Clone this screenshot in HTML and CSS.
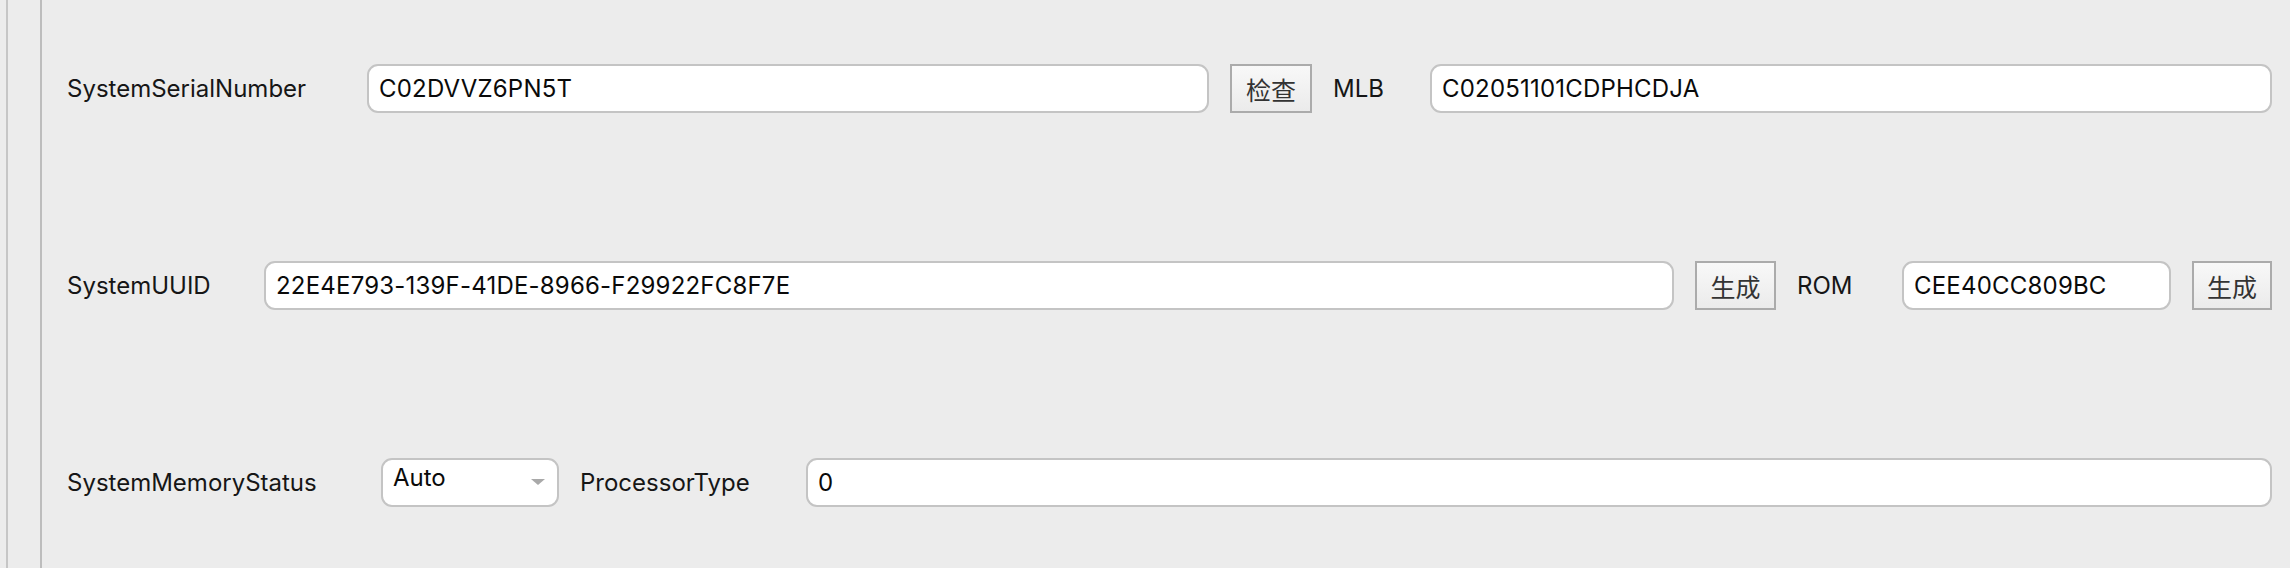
FILE: index.html
```html
<!DOCTYPE html>
<html lang="zh">
<head>
<meta charset="utf-8">
<title>PlatformInfo</title>
<link rel="stylesheet" href="styles.css">
</head>
<body>
<div class="page">
  <div class="edge"></div>
  <div class="rail"></div>
  <div class="content">
    <div class="row">
      <span class="label w-ssn">SystemSerialNumber</span>
      <div class="field grow">C02DVVZ6PN5T</div>
      <button class="btn w-check">检查</button>
      <span class="label w-mlb">MLB</span>
      <div class="field grow">C02051101CDPHCDJA</div>
    </div>
    <div class="row">
      <span class="label w-uuid">SystemUUID</span>
      <div class="field grow">22E4E793-139F-41DE-8966-F29922FC8F7E</div>
      <button class="btn w-gen1">生成</button>
      <span class="label w-rom">ROM</span>
      <div class="field w-romf">CEE40CC809BC</div>
      <button class="btn w-gen2">生成</button>
    </div>
    <div class="row">
      <span class="label w-mem">SystemMemoryStatus</span>
      <div class="select w-sel"><span>Auto</span><span class="arrow"></span></div>
      <span class="label w-proc">ProcessorType</span>
      <div class="field grow">0</div>
    </div>
  </div>
</div>
</body>
</html>
```
FILE: styles.css
```css
html, body {
  margin: 0;
  padding: 0;
  background: #ececec;
}
body {
  font-family: Inter, "Liberation Sans", "Noto Sans CJK SC", sans-serif;
  font-size: 24px;
  color: #161616;
}
.page {
  display: flex;
  width: 2290px;
  height: 568px;
  overflow: hidden;
}
.edge {
  width: 6px;
  flex: none;
}
.rail {
  width: 32px;
  flex: none;
  border-left: 2px solid #c6c6c6;
}
.content {
  flex: 1;
  border-left: 2px solid #bdbdbd;
  padding: 64px 18px 0 25px;
  display: flex;
  flex-direction: column;
  gap: 148px;
}
.row {
  display: flex;
  align-items: center;
  gap: 21px;
  height: 49px;
}
.label {
  flex: none;
  white-space: nowrap;
  color: #161616;
}
.w-ssn { width: 279px; }
.w-mlb { width: 76px; }
.w-uuid { width: 176px; }
.w-rom { width: 84px; }
.w-mem { width: 293px; }
.w-proc { width: 205px; }
.field {
  box-sizing: border-box;
  height: 49px;
  background: #ffffff;
  border: 2px solid #c4c4c4;
  border-radius: 11px;
  padding: 0 10px;
  display: flex;
  align-items: center;
  color: #0a0a0a;
  letter-spacing: 0.2px;
  white-space: nowrap;
  overflow: hidden;
}
.grow { flex: 1; min-width: 0; }
.w-romf { width: 269px; flex: none; }
.btn {
  box-sizing: border-box;
  flex: none;
  height: 49px;
  border: 2px solid #ababab;
  border-radius: 0;
  background: linear-gradient(#f8f8f8, #ebebeb);
  font-family: "Noto Sans CJK SC", sans-serif;
  font-size: 25px;
  color: #333333;
  padding: 0;
}
.w-check { width: 82px; }
.w-gen1 { width: 81px; }
.w-gen2 { width: 80px; }
.select {
  box-sizing: border-box;
  flex: none;
  height: 49px;
  background: #ffffff;
  border: 2px solid #c4c4c4;
  border-radius: 11px;
  padding: 0 12px 10px 10px;
  display: flex;
  align-items: center;
  justify-content: space-between;
  color: #0a0a0a;
}
.w-sel { width: 178px; }
.arrow {
  width: 0;
  height: 0;
  border-left: 7px solid transparent;
  border-right: 7px solid transparent;
  border-top: 6px solid #a9a9a9;
  margin-top: 8px;
}
```
